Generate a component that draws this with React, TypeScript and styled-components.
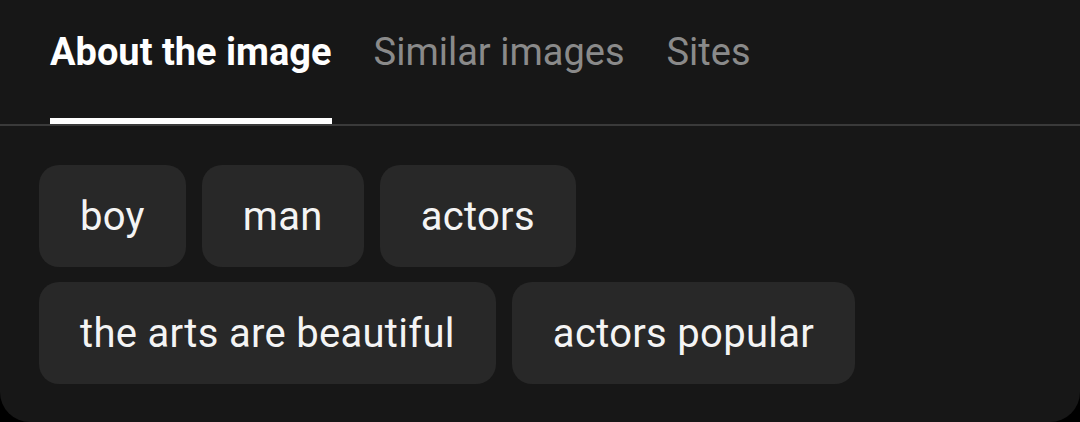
import React, { useState } from 'react';
import styled, { createGlobalStyle } from 'styled-components';

const GlobalStyle = createGlobalStyle`
  html, body {
    margin: 0;
    padding: 0;
    background: #000;
  }
  body {
    font-family: Roboto, 'Liberation Sans', Arial, sans-serif;
  }
`;

const tabs = ['About the image', 'Similar images', 'Sites'];

const tags: string[][] = [
  ['boy', 'man', 'actors'],
  ['the arts are beautiful', 'actors popular'],
];

const Card = styled.div`
  width: 1080px;
  height: 422px;
  box-sizing: border-box;
  background: #171717;
  border-radius: 0 0 30px 30px;
  overflow: hidden;
`;

const TabBar = styled.nav`
  display: flex;
  gap: 42px;
  padding: 0 50px;
  border-bottom: 2px solid #3a3a3a;
`;

const Tab = styled.button<{ active: boolean }>`
  position: relative;
  margin: 0;
  padding: 31px 0 50px;
  border: none;
  background: none;
  cursor: pointer;
  font-family: inherit;
  font-size: 38px;
  line-height: 43px;
  font-weight: ${({ active }) => (active ? 700 : 400)};
  color: ${({ active }) => (active ? '#ffffff' : '#8a8a8a')};

  &::after {
    content: '';
    position: absolute;
    left: 0;
    right: 0;
    bottom: 0;
    height: 6px;
    background: ${({ active }) => (active ? '#ffffff' : 'transparent')};
  }
`;

const Tags = styled.div`
  display: flex;
  flex-direction: column;
  gap: 15px;
  padding: 39px 39px 0;
`;

const TagRow = styled.div`
  display: flex;
  gap: 16px;
`;

const Tag = styled.button`
  height: 102px;
  margin: 0;
  padding: 0 41px;
  border: none;
  border-radius: 20px;
  background: #282828;
  color: #f4f4f4;
  font-family: inherit;
  font-size: 40px;
  letter-spacing: 0.3px;
  cursor: pointer;
`;

const App: React.FC = () => {
  const [active, setActive] = useState(0);

  return (
    <>
      <GlobalStyle />
      <Card>
        <TabBar>
          {tabs.map((label, i) => (
            <Tab key={label} active={i === active} onClick={() => setActive(i)}>
              {label}
            </Tab>
          ))}
        </TabBar>
        <Tags>
          {tags.map((row, r) => (
            <TagRow key={r}>
              {row.map((tag) => (
                <Tag key={tag}>{tag}</Tag>
              ))}
            </TagRow>
          ))}
        </Tags>
      </Card>
    </>
  );
};

export default App;
